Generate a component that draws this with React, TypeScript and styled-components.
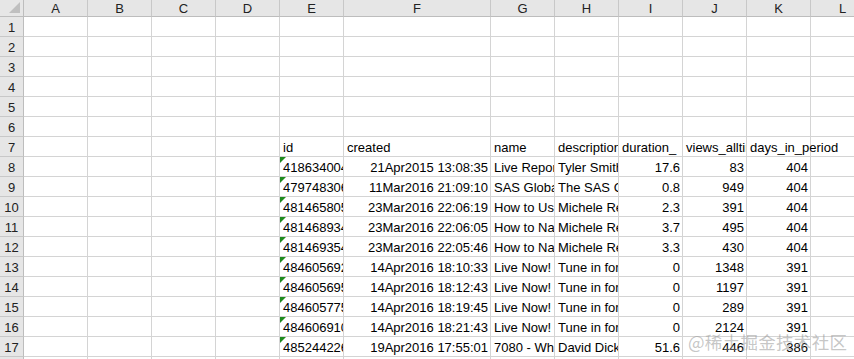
import React from "react";
import styled, { createGlobalStyle } from "styled-components";

const Global = createGlobalStyle`
  html, body { margin: 0; padding: 0; background: #fff; overflow: hidden; }
  body { font-family: "Liberation Sans", Arial, sans-serif; }
`;

const Sheet = styled.div`
  position: relative;
  width: 854px;
  height: 359px;
  overflow: hidden;
  background: #fff;
`;

const Grid = styled.div`
  display: grid;
  grid-template-columns: 24px repeat(4, 64px) 64px 147px repeat(5, 64px) 64px;
  grid-auto-rows: 20px;
  grid-template-rows: 17px;
  font-size: 13px;
  color: #000;
`;

const Corner = styled.div`
  position: relative;
  background: #e6e6e6;
  border-right: 1px solid #bdbdbd;
  border-bottom: 1px solid #bdbdbd;
  &::after {
    content: "";
    position: absolute;
    right: 3px;
    bottom: 3px;
    width: 0;
    height: 0;
    border-left: 11px solid transparent;
    border-bottom: 11px solid #bfbfbf;
  }
`;

const ColHead = styled.div`
  background: #e6e6e6;
  border-right: 1px solid #c8c8c8;
  border-bottom: 1px solid #bdbdbd;
  display: flex;
  align-items: center;
  justify-content: center;
  font-size: 13px;
  color: #222;
  line-height: 1;
  padding-top: 1px;
  box-sizing: border-box;
`;

const RowHead = styled.div`
  background: #e6e6e6;
  border-right: 1px solid #bdbdbd;
  border-bottom: 1px solid #c8c8c8;
  display: flex;
  align-items: center;
  justify-content: center;
  font-size: 13px;
  color: #222;
  padding-top: 2px;
  box-sizing: border-box;
`;

const Cell = styled.div<{ $align?: "left" | "right"; $clip?: boolean; $flag?: boolean }>`
  position: relative;
  border-right: 1px solid #d4d4d4;
  border-bottom: 1px solid #d4d4d4;
  box-sizing: border-box;
  white-space: nowrap;
  overflow: ${(p) => (p.$clip ? "hidden" : "visible")};
  text-align: ${(p) => p.$align || "left"};
  padding: 3px ${(p) => (p.$align === "right" ? "2px" : "0")} 0 ${(p) => (p.$align === "right" ? "0" : "3px")};
  line-height: 16px;
  z-index: ${(p) => (p.$clip ? 0 : 1)};
  &::before {
    content: "";
    display: ${(p) => (p.$flag ? "block" : "none")};
    position: absolute;
    left: 0;
    top: 0;
    width: 0;
    height: 0;
    border-top: 6px solid #1e8a1e;
    border-right: 6px solid transparent;
  }
`;

const Watermark = styled.div`
  position: absolute;
  left: 688px;
  top: 329px;
  font-family: "Noto Sans CJK SC", "Noto Sans", sans-serif;
  font-size: 17.5px;
  color: rgba(150, 150, 150, 0.55);
  letter-spacing: 0.3px;
  white-space: nowrap;
  pointer-events: none;
  z-index: 5;
`;

const letters = ["A", "B", "C", "D", "E", "F", "G", "H", "I", "J", "K", "L"];

type Row = [string, string, string, string, string, string, string];

const data: Row[] = [
  ["418634004", "21Apr2015 13:08:35", "Live Report", "Tyler Smith", "17.6", "83", "404"],
  ["479748306", "11Mar2016 21:09:10", "SAS Global", "The SAS Global", "0.8", "949", "404"],
  ["481465805", "23Mar2016 22:06:19", "How to Use", "Michele Reister", "2.3", "391", "404"],
  ["481468934", "23Mar2016 22:06:05", "How to Navigate", "Michele Reister", "3.7", "495", "404"],
  ["481469354", "23Mar2016 22:05:46", "How to Navigate", "Michele Reister", "3.3", "430", "404"],
  ["484605692", "14Apr2016 18:10:33", "Live Now!", "Tune in for", "0", "1348", "391"],
  ["484605695", "14Apr2016 18:12:43", "Live Now!", "Tune in for", "0", "1197", "391"],
  ["484605775", "14Apr2016 18:19:45", "Live Now!", "Tune in for", "0", "289", "391"],
  ["484606910", "14Apr2016 18:21:43", "Live Now!", "Tune in for", "0", "2124", "391"],
  ["485244226", "19Apr2016 17:55:01", "7080 - What", "David Dickey", "51.6", "446", "386"],
];

const headers = ["id", "created", "name", "description", "duration_", "views_alltime", "days_in_period"];

function EmptyCells({ n }: { n: number }) {
  return (
    <>
      {Array.from({ length: n }).map((_, i) => (
        <Cell key={i} $clip />
      ))}
    </>
  );
}

export default function App() {
  const rows: React.ReactNode[] = [];
  for (let r = 1; r <= 18; r++) {
    const cells: React.ReactNode[] = [<RowHead key="h">{r}</RowHead>];
    if (r === 7) {
      cells.push(<EmptyCells key="e" n={4} />);
      headers.forEach((h, i) =>
        cells.push(
          <Cell key={h} $clip={i < 6}>
            {h}
          </Cell>
        )
      );
      cells.push(<Cell key="l" $clip />);
    } else if (r >= 8 && r <= 17) {
      const d = data[r - 8];
      cells.push(<EmptyCells key="e" n={4} />);
      cells.push(
        <Cell key="id" $clip $flag>
          {d[0]}
        </Cell>
      );
      cells.push(
        <Cell key="cr" $clip $align="right">
          {d[1]}
        </Cell>
      );
      cells.push(
        <Cell key="nm" $clip>
          {d[2]}
        </Cell>
      );
      cells.push(
        <Cell key="ds" $clip>
          {d[3]}
        </Cell>
      );
      cells.push(
        <Cell key="du" $clip $align="right">
          {d[4]}
        </Cell>
      );
      cells.push(
        <Cell key="vw" $clip $align="right">
          {d[5]}
        </Cell>
      );
      cells.push(
        <Cell key="dy" $clip $align="right">
          {d[6]}
        </Cell>
      );
      cells.push(<Cell key="l" $clip />);
    } else {
      cells.push(<EmptyCells key="e" n={12} />);
    }
    rows.push(<React.Fragment key={r}>{cells}</React.Fragment>);
  }

  return (
    <>
      <Global />
      <Sheet>
        <Grid>
          <Corner />
          {letters.map((l) => (
            <ColHead key={l}>{l}</ColHead>
          ))}
          {rows}
        </Grid>
        <Watermark>@稀土掘金技术社区</Watermark>
      </Sheet>
    </>
  );
}
